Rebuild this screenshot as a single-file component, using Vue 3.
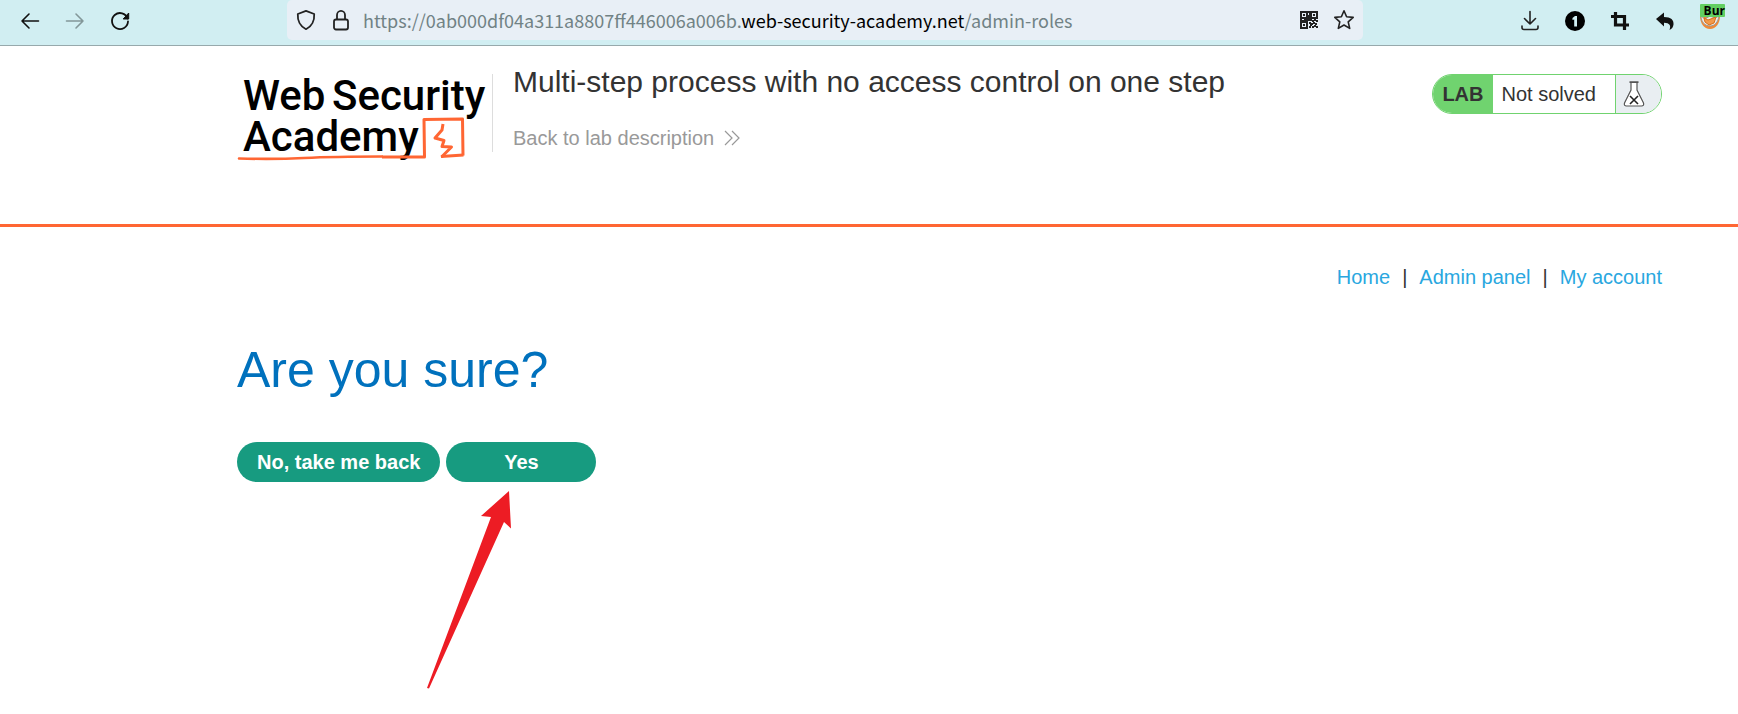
<script setup>
const navLinks = ['Home', 'Admin panel', 'My account']
const qrCells = [
  [8, 0], [8, 4], [9, 2], [0, 8], [2, 9], [4, 8], [6, 9], [8, 8], [10, 8], [12, 9], [14, 8], [16, 9],
  [9, 11], [11, 12], [13, 11], [15, 12], [9, 15], [12, 15], [14, 14], [16, 15], [10, 13], [8, 6], [6, 8],
]
</script>

<template>
  <div class="page">
    <div class="toolbar">
      <div class="tools">
        <button class="tool" aria-label="Back">
          <svg width="24" height="24" viewBox="0 0 24 24" fill="none" stroke="#111" stroke-width="1.6" stroke-linecap="round" stroke-linejoin="round"><path d="M20.5 12H4M11 5L4 12l7 7" /></svg>
        </button>
        <button class="tool" aria-label="Forward">
          <svg width="24" height="24" viewBox="0 0 24 24" fill="none" stroke="#839799" stroke-width="1.6" stroke-linecap="round" stroke-linejoin="round"><path d="M3.500 12H20M13 5l7 7-7 7" /></svg>
        </button>
        <button class="tool" aria-label="Reload">
          <svg width="24" height="24" viewBox="0 0 24 24"><path d="M19.600 9.500A8 8 0 1 0 20 12.500" fill="none" stroke="#111" stroke-width="1.8" stroke-linecap="round" /><path d="M20.700 4v6h-5.500z" fill="#111" stroke="#111" stroke-linejoin="round" /></svg>
        </button>
      </div>

      <div class="address">
        <svg width="24" height="24" viewBox="0 0 24 24" fill="none" stroke="#222" stroke-width="1.8" stroke-linejoin="round"><path d="M12 2.800L20.200 6c.4 6-2.200 12.300-8.200 15.200C6 18.300 3.400 12 3.800 6z" /></svg>
        <svg class="lock" width="24" height="24" viewBox="0 0 24 24" fill="none" stroke="#222" stroke-width="1.8"><rect x="5" y="11.500" width="14" height="10" rx="2" /><path d="M8 11.500V7a4 4.200 0 0 1 8 0v4.500" /></svg>
        <div class="url" role="textbox" aria-label="Address" tabindex="0">https://0ab000df04a311a8807ff446006a006b.<span class="host">web-security-academy.net</span>/admin-roles</div>
        <button class="tool" aria-label="QR code">
          <svg width="24" height="24" viewBox="-3 -3 24 24" fill="#222">
            <g fill="none" stroke="#222" stroke-width="2"><rect x="1" y="1" width="6" height="6" /><rect x="11" y="1" width="6" height="6" /><rect x="1" y="11" width="6" height="6" /></g>
            <rect x="3" y="3" width="2" height="2" /><rect x="13" y="3" width="2" height="2" /><rect x="3" y="13" width="2" height="2" />
            <rect v-for="([x, y], i) in qrCells" :key="i" :x="x" :y="y" width="2" height="2" />
          </svg>
        </button>
        <button class="tool star" aria-label="Bookmark">
          <svg width="24" height="24" viewBox="0 0 24 24" fill="none" stroke="#222" stroke-width="1.6" stroke-linejoin="round"><path d="M12 2.800l2.600 6 6.600.6-5 4.500 1.500 6.500L12 17l-5.700 3.400 1.500-6.500-5-4.500 6.600-.6z" /></svg>
        </button>
      </div>

      <div class="tools">
        <button class="tool" aria-label="Downloads">
          <svg width="24" height="24" viewBox="0 0 24 24" fill="none" stroke="#222" stroke-width="1.6" stroke-linecap="round" stroke-linejoin="round"><path d="M12 2.500V15M6.500 9.500L12 15l5.500-5.500M4 17v1.500q0 2 2 2h12q2 0 2-2V17" /></svg>
        </button>
        <button class="tool" aria-label="Passwords">
          <svg width="24" height="24" viewBox="0 0 24 24"><circle cx="12" cy="12" r="10" fill="#000" /><path d="M12 7h2v10.500h-2.800v-7L9.500 11V9z" fill="#d1eef2" /></svg>
        </button>
        <button class="tool" aria-label="Crop">
          <svg width="24" height="24" viewBox="0 0 24 24" fill="none" stroke="#111" stroke-width="3.2"><path d="M7.500 3v13H21M3 7.500h13.500V21" /></svg>
        </button>
        <button class="tool" aria-label="Undo">
          <svg width="24" height="24" viewBox="0 0 24 24"><path d="M3 10l8-6.500V8c7 0 10 3 9.500 7.500-.3 2.700-1.700 4.500-4 5.500 1.800-4.500.2-7-5.500-7.200v3.700z" fill="#111" /></svg>
        </button>
        <button class="tool profile" aria-label="Burp extension">
          <svg width="24" height="14" viewBox="0 0 24 14"><path d="M2 0h20c0 7-4 13-10 13S2 7 2 0z" fill="#f08a35" /><path d="M3 0c0 6 4 10 9 10s8-4 9-10l-4 2-5-2-5 3z" fill="#eee9e4" stroke="#999" /><path d="M6 2l4 2 8-3-2 6-5 2-4-3z" fill="#f29a4a" stroke="#d96e18" /></svg>
          <span class="tag">Bur</span>
        </button>
      </div>
    </div>

    <header class="lab-header">
      <svg class="logo" width="250" height="98" viewBox="0 0 250 98" role="img" aria-label="Web Security Academy">
        <g class="wordmark"><text x="6" y="46">Web</text><text x="95" y="46">Security</text><text x="6" y="87">Academy</text></g>
        <g fill="none" stroke="#ff6633" stroke-linejoin="round">
          <path d="M2 94.500q35 1 65-.5t78-1.500" stroke-width="2.600" stroke-linecap="round" />
          <path d="M145 93h42.500l-.5-37.500 38.500-.5.500 36.500" stroke-width="3" />
          <path d="M204 92.500l22.500-1.500" stroke-width="3" />
          <path d="M206 60l-1 6-7 8 9 2.500-2 6 9.500.5-10 10" stroke-width="3" />
        </g>
      </svg>
      <div class="lab-text">
        <h2>Multi-step process with no access control on one step</h2>
        <a class="back" href="#">Back to lab description
          <svg width="16" height="16" viewBox="0 0 16 16" fill="none" stroke="#999" stroke-width="1.200"><path d="M1 1l7 7-7 7M8 1l7 7-7 7" /></svg>
        </a>
      </div>
      <div class="status">
        <span class="lab">LAB</span>
        <span class="state">Not solved</span>
        <span class="flask">
          <svg width="22" height="26" viewBox="0 0 22 26" fill="#fff" stroke="#555" stroke-width="1.200"><path d="M8 1.500V9L1.500 22q-.8 3 2 3h15q2.800 0 2-3L14 9V1.500" /><path d="M6.500 1.200h9" stroke-width="1.800" /><path d="M7 15l8 8M15 15l-8 8" stroke="#222" stroke-width="1.600" /></svg>
        </span>
      </div>
    </header>

    <main>
      <nav>
        <template v-for="(link, i) in navLinks" :key="link">
          <span v-if="i">|</span>
          <a href="#">{{ link }}</a>
        </template>
      </nav>
      <h1>Are you sure?</h1>
      <div class="actions">
        <button class="action">No, take me back</button>
        <button class="action">Yes</button>
      </div>
      <svg class="arrow" width="86" height="200" viewBox="0 0 86 200" role="img" aria-label="Arrow to Yes"><path d="M83 1L85 38.500L78 32L3 198.500L1 198L65 27L55 26Z" fill="#ed1c24" /></svg>
    </main>
  </div>
</template>

<style>
body { margin: 0; background: #fff; }
</style>

<style scoped>
.page { font-family: "Liberation Sans", Arial, sans-serif; font-size: 20px; line-height: 24px; color: #333; }
button { font: inherit; border: 0; cursor: pointer; }
a { text-decoration: none; }
svg { display: block; flex: none; }

.toolbar { display: flex; align-items: flex-start; padding: 0 12px 5px 18px; background: #d1eef2; border-bottom: 1px solid #97a9ac; }
.tools { display: flex; gap: 21px; padding-top: 9px; }
.tool { width: 24px; height: 24px; padding: 0; background: none; flex: none; }
.address { flex: 1; min-width: 0; display: flex; align-items: center; box-sizing: border-box; height: 40px; margin: 0 155px; padding: 0 7px; background: #e8eff6; border-radius: 5px; }
.lock { margin-left: 11px; }
.url { flex: 1; min-width: 0; margin-left: 10px; overflow: hidden; white-space: nowrap; font-family: "Noto Sans CJK SC", sans-serif; font-size: 18px; color: #718285; }
.host { color: #000; }
.star { margin-left: 11px; }
.profile { position: relative; width: 28px; }
.profile svg { position: absolute; left: 0; top: 7px; }
.tag { position: absolute; left: 2px; top: -5px; width: 25px; height: 13px; background: #62cf62; border-radius: 1px; color: #000; font: bold 12px/13px "Open Sans", sans-serif; text-align: right; }

.lab-header { display: flex; align-items: flex-start; padding: 18px 76px 62px 237px; border-bottom: 3px solid #ff6633; }
.wordmark { font-family: Roboto, sans-serif; font-size: 42px; font-weight: 500; fill: #000; }
.lab-text { flex: 1; margin: 10px 20px 0 5px; padding-left: 20px; border-left: 1px solid #ddd; height: 78px; }
h2 { margin: -10px 0 26px; font-size: 30px; line-height: 36px; font-weight: 400; }
.back { display: inline-flex; align-items: center; gap: 10px; color: #999; }
.status { display: flex; box-sizing: border-box; height: 40px; margin-top: 10px; overflow: hidden; border: 1px solid #70d36f; border-radius: 20px; line-height: 38px; }
.lab { padding: 0 9px; background: #70d36f; font-weight: 700; font-size: 20px; }
.state { padding: 0 19px 0 9px; }
.flask { display: flex; align-items: center; padding: 0 16px 0 7px; background: #e9eef2; border-left: 1px solid #70d36f; }

main { padding: 38px 76px 0 237px; }
nav { display: flex; justify-content: flex-end; gap: 12px; }
nav a { color: #29a7df; }
h1 { margin: 52px 0 43px; font-size: 50px; line-height: 58px; font-weight: 400; color: #0071bd; }
.actions { display: flex; gap: 6px; }
.action { height: 40px; min-width: 150px; padding: 0 20px; border-radius: 20px; background: #179b80; color: #fff; font-weight: 700; }
.arrow { margin: 8px 0 0 189px; }
</style>
